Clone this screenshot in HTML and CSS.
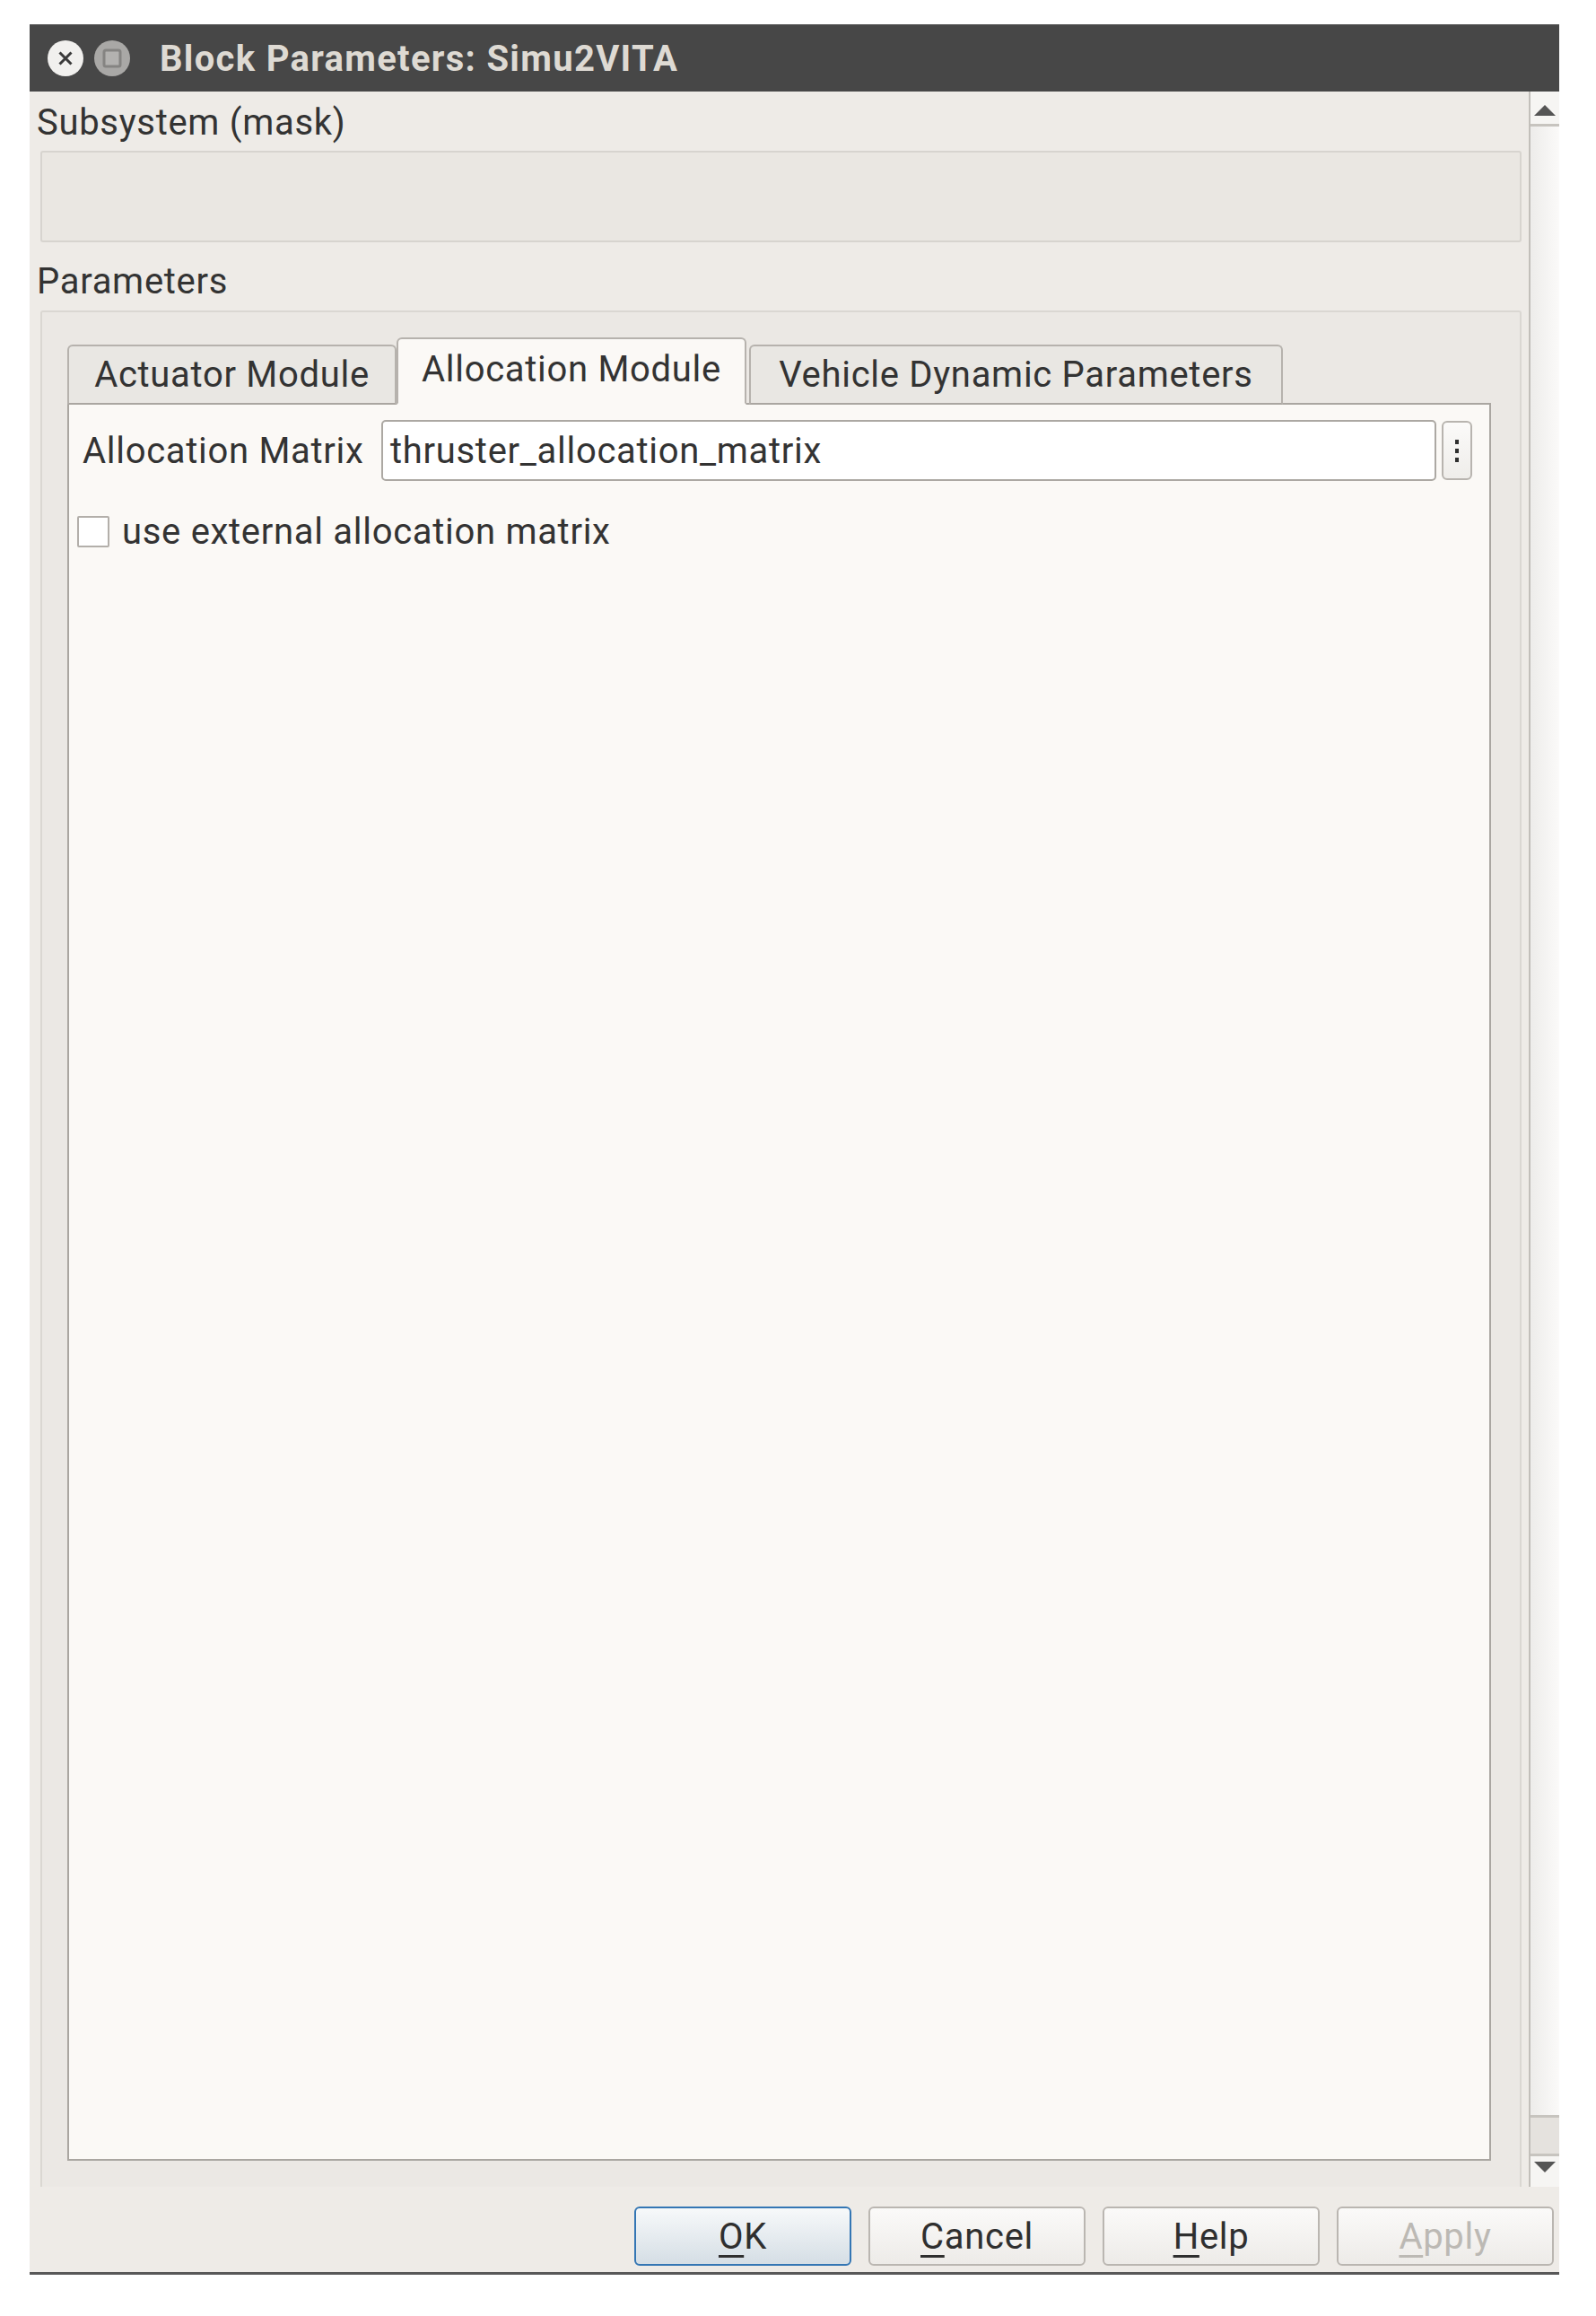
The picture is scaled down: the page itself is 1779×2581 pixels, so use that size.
FILE: index.html
```html
<!DOCTYPE html>
<html lang="en">

<head>
    <meta charset="UTF-8">
    <meta name="viewport" content="width=device-width, initial-scale=1.0">
    <title>Block Parameters: Simu2VITA</title>
    <link rel="stylesheet" href="styles.css">
</head>

<body>

    <div class="dialog">
        <div class="titlebar">
            <span class="win-btn">
                <svg width="42" height="42" viewBox="0 0 42 42">
                    <circle cx="21" cy="21" r="20" fill="#f1f0ee" />
                    <path d="M14.5 14.5 L27.5 27.5 M27.5 14.5 L14.5 27.5" stroke="#3a3a3a" stroke-width="3" />
                </svg>
            </span>
            <span class="win-btn">
                <svg width="42" height="42" viewBox="0 0 42 42">
                    <circle cx="21" cy="21" r="20" fill="#a9a8a6" />
                    <rect x="12" y="12" width="18" height="18" rx="2" fill="#b3b2b0" stroke="#858482" stroke-width="3" />
                </svg>
            </span>
            <span class="title">Block Parameters: Simu2VITA</span>
        </div>

        <div class="body">
            <div class="scroll-area">
                <div class="section-label">Subsystem (mask)</div>
                <div class="mask-box"></div>
                <div class="section-label params-label">Parameters</div>

                <div class="group">
                    <div class="tabs">
                        <div class="tab tab-actuator">Actuator Module</div>
                        <div class="tab tab-alloc active">Allocation Module</div>
                        <div class="tab tab-vehicle">Vehicle Dynamic Parameters</div>
                    </div>
                    <div class="pane">
                        <div class="field-row">
                            <span class="field-label">Allocation Matrix</span>
                            <div class="input">thruster_allocation_matrix</div>
                            <div class="more-btn"><i></i><i></i><i></i></div>
                        </div>
                        <div class="check-row">
                            <span class="checkbox"></span>
                            <span>use external allocation matrix</span>
                        </div>
                    </div>
                </div>
            </div>

            <div class="scrollbar">
                <div class="sb-btn sb-up"><span class="arrow-up"></span></div>
                <div class="sb-thumb"></div>
                <div class="sb-trough"></div>
                <div class="sb-btn sb-down"><span class="arrow-down"></span></div>
            </div>
        </div>

        <div class="footer">
            <button class="btn btn-default"><u>O</u>K</button>
            <button class="btn"><u>C</u>ancel</button>
            <button class="btn"><u>H</u>elp</button>
            <button class="btn btn-disabled"><u>A</u>pply</button>
        </div>
    </div>

</body>

</html>
```

FILE: styles.css
```css
* {
    margin: 0;
    padding: 0;
    box-sizing: border-box;
}

body {
    background: #ffffff;
    font-family: Roboto, "Liberation Sans", sans-serif;
    font-size: 40px;
    letter-spacing: 0.7px;
    color: #333333;
}

.dialog {
    width: 1705px;
    margin: 27px 0 0 33px;
    display: flex;
    flex-direction: column;
    background: #eeebe7;
}

/* title bar */
.titlebar {
    height: 75px;
    background: #474747;
    border-top: 1px solid #5d5d5d;
    display: flex;
    align-items: center;
    padding-left: 19px;
}

.win-btn {
    display: flex;
    margin-right: 10px;
}

.title {
    margin-left: 22px;
    font-weight: bold;
    color: #dedad3;
    letter-spacing: 1.3px;
}

/* scrolling part */
.body {
    height: 2335px;
    display: flex;
}

.scroll-area {
    flex: 1;
    display: flex;
    flex-direction: column;
    overflow: hidden;
    padding: 11px 8px 0 8px;
}

.section-label {
    line-height: 48px;
}

.mask-box {
    margin: 7px 0 0 4px;
    height: 102px;
    background: #eae7e2;
    border: 2px solid #d7d4cf;
    border-radius: 3px;
}

.params-label {
    margin-top: 20px;
}

.group {
    flex: 1;
    display: flex;
    flex-direction: column;
    margin: 8px 0 0 4px;
    padding: 28px 32px 29px 28px;
    background: #ebe8e4;
    border: 2px solid #dad7d2;
    border-bottom: none;
    border-radius: 3px 3px 0 0;
}

/* tabs */
.tabs {
    display: flex;
    align-items: flex-end;
    height: 75px;
    margin-bottom: -2px;
    position: relative;
    z-index: 1;
}

.tab {
    height: 67px;
    display: flex;
    align-items: center;
    justify-content: center;
    background: #e9e7e3;
    border: 2px solid #b6b2ad;
    border-bottom: 2px solid #aaa6a1;
    border-radius: 6px 6px 0 0;
    white-space: nowrap;
}

.tab-actuator {
    width: 367px;
}

.tab-alloc {
    width: 390px;
}

.tab-vehicle {
    width: 595px;
    margin-left: 3px;
}

.tab.active {
    height: 75px;
    padding-bottom: 4px;
    background: #fbf9f6;
    border-bottom-color: #fbf9f6;
}

.pane {
    flex: 1;
    background: #fbf9f6;
    border: 2px solid #aaa6a1;
    padding: 17px 19px 0 9px;
}

.field-row {
    display: grid;
    grid-template-columns: 327px 1fr 34px;
    column-gap: 6px;
    align-items: center;
    padding-left: 6px;
}

.field-label {
    white-space: nowrap;
}

.input {
    height: 68px;
    display: flex;
    align-items: center;
    padding-left: 8px;
    background: #ffffff;
    border: 2px solid #aca8a3;
    border-radius: 5px;
}

.more-btn {
    height: 66px;
    display: flex;
    flex-direction: column;
    align-items: center;
    justify-content: center;
    gap: 5px;
    border: 2px solid #b8b4af;
    border-radius: 6px;
    background: linear-gradient(#fbfaf9, #efedea);
}

.more-btn i {
    width: 4px;
    height: 5px;
    background: #2e2e2e;
}

.check-row {
    display: flex;
    align-items: center;
    margin-top: 33px;
}

.checkbox {
    width: 36px;
    height: 35px;
    margin-right: 14px;
    background: #ffffff;
    border: 2px solid #b3afaa;
    border-radius: 2px;
}

/* scrollbar */
.scrollbar {
    width: 34px;
    display: flex;
    flex-direction: column;
    border-left: 2px solid #c2bfba;
    background: #f6f5f3;
}

.sb-btn {
    display: flex;
    align-items: center;
    justify-content: center;
}

.sb-up {
    height: 39px;
    border-bottom: 3px solid #c7c4bf;
    padding-top: 6px;
}

.sb-down {
    height: 34px;
    padding-bottom: 10px;
}

.sb-thumb {
    flex: 1;
    background: linear-gradient(to right, #edecea, #fbfaf9);
}

.sb-trough {
    height: 46px;
    background: #e5e2de;
    border-top: 3px solid #c7c4bf;
    border-bottom: 3px solid #c7c4bf;
}

.arrow-up {
    border-left: 12px solid transparent;
    border-right: 12px solid transparent;
    border-bottom: 12px solid #555555;
}

.arrow-down {
    border-left: 12px solid transparent;
    border-right: 12px solid transparent;
    border-top: 12px solid #555555;
}

/* buttons */
.footer {
    height: 98px;
    display: flex;
    justify-content: flex-end;
    gap: 19px;
    padding: 22px 6px 0 0;
    border-bottom: 3px solid #585858;
}

.btn {
    width: 242px;
    height: 66px;
    font-family: Roboto, "Liberation Sans", sans-serif;
    font-size: 40px;
    letter-spacing: 0.7px;
    color: #2f2f2f;
    background: linear-gradient(#fbfaf9, #edebe8);
    border: 2px solid #bab6b1;
    border-radius: 6px;
}

.btn u {
    text-decoration-thickness: 3px;
    text-underline-offset: 7px;
}

.btn-default {
    border-color: #3476b4;
    background: linear-gradient(#f7f9fa, #d5dee5);
}

.btn-disabled {
    color: #bcb9b4;
}
```
